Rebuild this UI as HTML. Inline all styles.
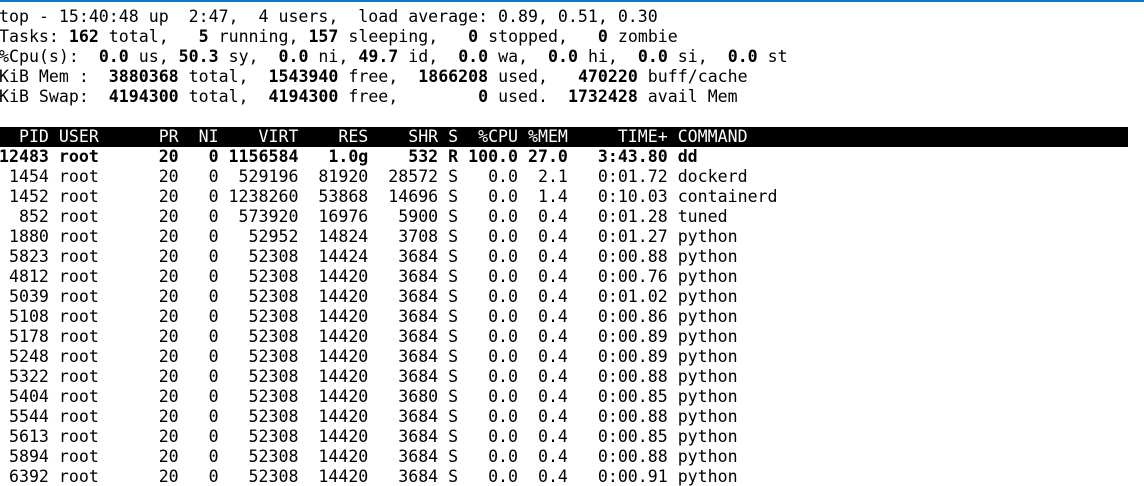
<!DOCTYPE html>
<html><head><style>
html,body{margin:0;padding:0;background:#fff;width:1144px;height:486px;overflow:hidden;position:relative}
#bl{position:absolute;left:0;top:0;width:1144px;height:2px;background:#0a78d0}
#bar{position:absolute;left:0;top:127px;width:1128px;height:20px;background:#000}
pre{position:absolute;left:-1px;top:7px;margin:0;font-family:"DejaVu Sans Mono","Liberation Mono",monospace;font-size:16.58px;line-height:20px;color:#000;white-space:pre}
b{font-weight:bold}
.h{color:#fff}
</style></head><body>
<div id="bl"></div><div id="bar"></div>
<pre>top - 15:40:48 up  2:47,  4 users,  load average: 0.89, 0.51, 0.30
Tasks: <b>162</b> total,   <b>5</b> running, <b>157</b> sleeping,   <b>0</b> stopped,   <b>0</b> zombie
%Cpu(s):  <b>0.0</b> us, <b>50.3</b> sy,  <b>0.0</b> ni, <b>49.7</b> id,  <b>0.0</b> wa,  <b>0.0</b> hi,  <b>0.0</b> si,  <b>0.0</b> st
KiB Mem :  <b>3880368</b> total,  <b>1543940</b> free,  <b>1866208</b> used,   <b>470220</b> buff/cache
KiB Swap:  <b>4194300</b> total,  <b>4194300</b> free,        <b>0</b> used.  <b>1732428</b> avail Mem

<span class="h">  PID USER      PR  NI    VIRT    RES    SHR S  %CPU %MEM     TIME+ COMMAND</span>
<b>12483 root      20   0 1156584   1.0g    532 R 100.0 27.0   3:43.80 dd</b>
 1454 root      20   0  529196  81920  28572 S   0.0  2.1   0:01.72 dockerd
 1452 root      20   0 1238260  53868  14696 S   0.0  1.4   0:10.03 containerd
  852 root      20   0  573920  16976   5900 S   0.0  0.4   0:01.28 tuned
 1880 root      20   0   52952  14824   3708 S   0.0  0.4   0:01.27 python
 5823 root      20   0   52308  14424   3684 S   0.0  0.4   0:00.88 python
 4812 root      20   0   52308  14420   3684 S   0.0  0.4   0:00.76 python
 5039 root      20   0   52308  14420   3684 S   0.0  0.4   0:01.02 python
 5108 root      20   0   52308  14420   3684 S   0.0  0.4   0:00.86 python
 5178 root      20   0   52308  14420   3684 S   0.0  0.4   0:00.89 python
 5248 root      20   0   52308  14420   3684 S   0.0  0.4   0:00.89 python
 5322 root      20   0   52308  14420   3684 S   0.0  0.4   0:00.88 python
 5404 root      20   0   52308  14420   3680 S   0.0  0.4   0:00.85 python
 5544 root      20   0   52308  14420   3684 S   0.0  0.4   0:00.88 python
 5613 root      20   0   52308  14420   3684 S   0.0  0.4   0:00.85 python
 5894 root      20   0   52308  14420   3684 S   0.0  0.4   0:00.88 python
 6392 root      20   0   52308  14420   3684 S   0.0  0.4   0:00.91 python</pre>
</body></html>
